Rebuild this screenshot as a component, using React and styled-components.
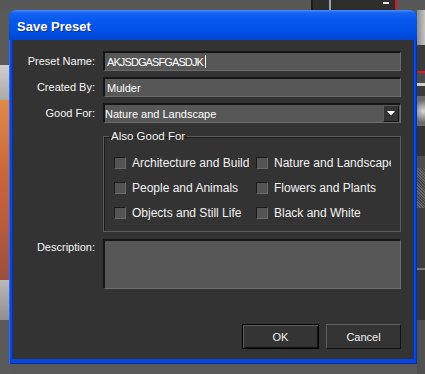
import React from "react";
import styled, { createGlobalStyle } from "styled-components";

const GlobalStyle = createGlobalStyle`
	html, body {
		margin: 0;
		padding: 0;
		background: #595959;
	}
	body {
		font-family: "Liberation Sans", Arial, sans-serif;
		font-size: 11px;
		color: #f2f2f2;
	}
`;

const categories = [
	["Architecture and Buildings", "Nature and Landscape"],
	["People and Animals", "Flowers and Plants"],
	["Objects and Still Life", "Black and White"],
];

export default function App() {
	return (
		<>
			<GlobalStyle />
			<Screen>
				{/* the app behind the modal */}
				<TopStrip>
					<Filler />
					<ToolPanel>
						<PanelEdge />
						<PanelLine />
						<PanelMinus />
					</ToolPanel>
					<RedLine />
					<Filler $w="28px" />
				</TopStrip>
				<LeftStrip>
					<Block $h="55px" $bg="#595959" />
					<Block $h="35px" $bg="linear-gradient(#cfcfcf, #a9a9a9)" />
					<Block $h="130px" $bg="linear-gradient(#e08a4a, #c9643a 60%, #b85a3c)" />
					<Block $h="50px" $bg="linear-gradient(#b35a40, #9c4f3e)" />
					<Block $h="40px" $bg="linear-gradient(#b9b9b9, #8f8f8f)" />
					<Block $h="64px" $bg="#5a5a5a" />
				</LeftStrip>

				<Dialog>
					<TitleBar>Save Preset</TitleBar>
					<Body>
						<Form>
							<Label>Preset Name:</Label>
							<Field $tight>
								AKJSDGASFGASDJK
								<Caret />
							</Field>

							<Label>Created By:</Label>
							<Field>Mulder</Field>

							<Label>Good For:</Label>
							<Field $select>
								<span>Nature and Landscape</span>
								<DropButton>
									<svg width="8" height="5" viewBox="0 0 8 5">
										<path d="M0 0H8L4 4.5Z" fill="#fff" />
									</svg>
								</DropButton>
							</Field>

							<Group>
								<Legend>Also Good For</Legend>
								<CheckGrid>
									{categories.flat().map((c) => (
										<CheckRow key={c}>
											<Box />
											<CheckText>{c}</CheckText>
										</CheckRow>
									))}
								</CheckGrid>
							</Group>

							<Label $top>Description:</Label>
							<TextArea />
						</Form>

						<Buttons>
							<Button $default>OK</Button>
							<Button>Cancel</Button>
						</Buttons>
					</Body>
				</Dialog>

				<RightStrip>
					<Block $h="35px" $bg="linear-gradient(90deg, #8c8c8c, #c4c4c4)" />
					<Block $h="26px" $bg="#3a3a3a" />
					<Block $h="2px" $bg="#e4161b" />
					<Block $h="10px" $bg="#4a4a4a" />
					<Block $h="3px" $bg="#cfcfcf" />
					<Block $h="10px" $bg="#3a3a3a" />
					<Block $h="30px" $bg="radial-gradient(circle at 80% 50%, #d8d8d8, #6a6a6a 70%)" />
					<Block $h="30px" $bg="#333" />
					<Block $h="12px" $bg="#4c4c4c" />
					<Block $h="40px" $bg="repeating-linear-gradient(45deg, #666 0 1px, #444 1px 2px)" />
					<Block $h="60px" $bg="#3c3c3c" />
					<Block $h="2px" $bg="#777" />
					<Block $h="50px" $bg="#363636" />
					<Block $h="54px" $bg="#505050" />
				</RightStrip>
			</Screen>
		</>
	);
}

const Screen = styled.div`
	width: 425px;
	height: 374px;
	overflow: hidden;
	display: grid;
	grid-template-columns: 9px 408px 8px;
	grid-template-rows: 10px 354px 10px;
	background: #595959;
`;

const TopStrip = styled.div`
	grid-column: 1 / -1;
	grid-row: 1;
	display: flex;
`;

const Filler = styled.div`
	flex: ${(p) => (p.$w ? `0 0 ${p.$w}` : 1)};
	background: #575757;
`;

const ToolPanel = styled.div`
	flex: 0 0 84px;
	display: flex;
	align-items: center;
	background: #2e2e2e;
`;

const PanelEdge = styled.div`
	width: 2px;
	align-self: stretch;
	background: #1c1c1c;
	margin-right: 16px;
`;

const PanelLine = styled.div`
	width: 2px;
	align-self: stretch;
	background: #9da3b0;
	margin-right: 52px;
`;

const PanelMinus = styled.div`
	width: 6px;
	height: 2px;
	margin-top: -4px;
	background: #eee;
`;

const RedLine = styled.div`
	flex: 0 0 2px;
	background: #e4161b;
`;

const LeftStrip = styled.div`
	grid-column: 1;
	grid-row: 2 / 4;
	display: flex;
	flex-direction: column;
`;

const RightStrip = styled.div`
	grid-column: 3;
	grid-row: 2 / 4;
	display: flex;
	flex-direction: column;
`;

const Block = styled.div`
	flex: 0 0 ${(p) => p.$h};
	background: ${(p) => p.$bg};
`;

const Dialog = styled.div`
	grid-column: 2;
	grid-row: 2;
	display: flex;
	flex-direction: column;
	background: #0a45e0;
	border-radius: 7px 7px 0 0;
	box-shadow: inset 1px 0 #2c68f4, inset -1px 0 #0032b0, inset 0 -1px #0030a0;
`;

const TitleBar = styled.div`
	height: 30px;
	box-sizing: border-box;
	padding: 3px 8px 0;
	display: flex;
	align-items: center;
	border-radius: 7px 7px 0 0;
	background: linear-gradient(#4a8cfa 0, #1463f2 3px, #0758ee 35%, #0150e4 75%, #0046d2 100%);
	font-size: 13px;
	font-weight: bold;
	color: #fff;
	text-shadow: 1px 1px #0b2f94;
`;

const Body = styled.div`
	flex: 1;
	margin: 0 4px 5px;
	padding: 11px 12px 10px 0;
	background: #333;
	display: flex;
	flex-direction: column;
	box-shadow: -1px 0 #0533a8, 1px 0 #0533a8;
`;

const Form = styled.div`
	display: grid;
	grid-template-columns: 82px 298px;
	column-gap: 8px;
	row-gap: 6px;
`;

const Label = styled.div`
	justify-self: end;
	align-self: ${(p) => (p.$top ? "start" : "center")};
	padding-top: ${(p) => (p.$top ? "2px" : "0")};
	line-height: 13px;
	white-space: nowrap;
	color: #f6f6f6;
`;

const Field = styled.div`
	height: 20px;
	box-sizing: border-box;
	display: flex;
	align-items: center;
	justify-content: ${(p) => (p.$select ? "space-between" : "flex-start")};
	padding: ${(p) => (p.$select ? "0 1px 0 0" : "0 2px")};
	background: #575757;
	border-style: solid;
	border-width: 2px 1px 1px 2px;
	border-color: #161616 #6c6c6c #6c6c6c #161616;
	white-space: nowrap;
	letter-spacing: ${(p) => (p.$tight ? "-0.9px" : "0")};
	color: #fff;
`;

const Caret = styled.span`
	display: inline-block;
	width: 1px;
	height: 13px;
	margin-left: 2px;
	background: #fff;
`;

const DropButton = styled.div`
	width: 16px;
	height: 17px;
	box-sizing: border-box;
	display: flex;
	align-items: center;
	justify-content: center;
	background: #333;
	border-style: solid;
	border-width: 1px;
	border-color: #5c5c5c #141414 #141414 #5c5c5c;
`;

const Group = styled.fieldset`
	grid-column: 2;
	margin: 1px 0;
	padding: 7px 10px 6px;
	border: 1px solid #5a5a5a;
	box-shadow: inset 1px 1px #1c1c1c;
	min-width: 0;
`;

const Legend = styled.legend`
	margin-left: -5px;
	padding: 0 2px;
	line-height: 13px;
	font-size: 11.5px;
`;

const CheckGrid = styled.div`
	display: grid;
	grid-template-columns: 135px 135px;
	column-gap: 7px;
	grid-auto-rows: 25px;
`;

const CheckRow = styled.div`
	display: flex;
	align-items: center;
	gap: 6px;
	min-width: 0;
`;

const Box = styled.span`
	flex: 0 0 12px;
	height: 12px;
	box-sizing: border-box;
	background: #545454;
	border-style: solid;
	border-width: 1px;
	border-color: #1a1a1a #6a6a6a #6a6a6a #1a1a1a;
`;

const CheckText = styled.span`
	width: 117px;
	overflow: hidden;
	white-space: nowrap;
	font-size: 12px;
`;

const TextArea = styled.div`
	grid-column: 2;
	height: 50px;
	box-sizing: border-box;
	background: #575757;
	border-style: solid;
	border-width: 2px 1px 1px 2px;
	border-color: #161616 #6c6c6c #6c6c6c #161616;
`;

const Buttons = styled.div`
	margin-top: auto;
	display: flex;
	justify-content: flex-end;
	gap: 7px;
`;

const Button = styled.div`
	width: ${(p) => (p.$default ? "77px" : "75px")};
	height: 25px;
	box-sizing: border-box;
	display: flex;
	align-items: center;
	justify-content: center;
	background: #343434;
	border-style: solid;
	border-width: 1px;
	border-color: ${(p) => (p.$default ? "#000" : "#5e5e5e #111 #111 #5e5e5e")};
	box-shadow: ${(p) => (p.$default ? "inset 1px 1px #5e5e5e, inset -1px -1px #111" : "none")};
`;
